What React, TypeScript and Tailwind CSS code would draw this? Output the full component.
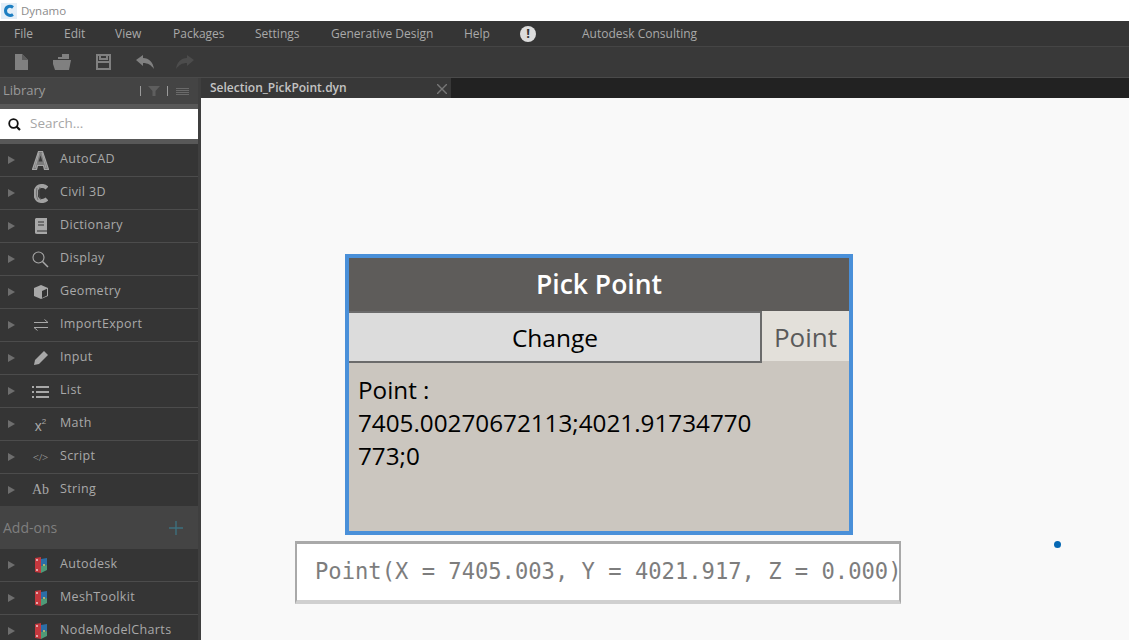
import type { ReactNode } from "react";

const menus = [
  { label: "File", w: "w-[50px]" },
  { label: "Edit", w: "w-[51px]" },
  { label: "View", w: "w-[58px]" },
  { label: "Packages", w: "w-[82px]" },
  { label: "Settings", w: "w-[76px]" },
  { label: "Generative Design", w: "w-[133px]" },
  { label: "Help", w: "w-[56px]" },
];

function PackageIcon() {
  return (
    <svg width="12" height="16" viewBox="0 0 12 16">
      <path d="M0 1 L6 0 V16 L0 15 Z" fill="#c4383e" />
      <path d="M6 2 L12 1 V8 L6 9 Z" fill="#2c6ea6" />
      <path d="M6 9 L12 8 V13 L6 16 Z" fill="#4f9a78" />
      <circle cx="2" cy="3" r="0.9" fill="#f4dede" />
      <circle cx="2" cy="13" r="0.9" fill="#f4dede" />
      <circle cx="9" cy="8" r="0.9" fill="#e8d26a" />
    </svg>
  );
}

const categories: { label: string; icon: ReactNode }[] = [
  {
    label: "AutoCAD",
    icon: (
      <svg width="17" height="19" viewBox="0 0 17 19" fill="none">
        <path d="M0.5 18.5 L6.5 0.5 H10.5 L16.5 18.5 H12.5 L11.5 14.5 H5.5 L4.5 18.5 Z" stroke="#a6a6a6" strokeWidth="1.2" fill="#7c7c7c" />
        <path d="M6.5 10.5 H10.5 L8.5 4.5 Z" fill="#3a3a3a" />
        <path d="M7 2 L3 17 M10 2 L14 17" stroke="#b8b8b8" strokeWidth="0.7" />
      </svg>
    ),
  },
  {
    label: "Civil 3D",
    icon: (
      <svg width="15" height="19" viewBox="0 0 15 19" fill="none">
        <path d="M14 4 C11 1 5 1 3 6 V13 C5 18 11 18 14 15" stroke="#a2a2a2" strokeWidth="4" />
        <path d="M4 4 C3 8 3 12 5 16 M7 3 C5 8 6 13 8 16" stroke="#5c5c5c" strokeWidth="0.7" />
      </svg>
    ),
  },
  {
    label: "Dictionary",
    icon: (
      <svg width="14" height="16" viewBox="0 0 14 16">
        <path d="M2 0 H13 V16 H3 C1 16 1 15 1 14 V1 Z" fill="#a8a8a8" />
        <path d="M4 4 H10 M4 7 H10 M3 13 H13" stroke="#333" strokeWidth="1.2" />
      </svg>
    ),
  },
  {
    label: "Display",
    icon: (
      <svg width="17" height="17" viewBox="0 0 17 17" fill="none" stroke="#a8a8a8" strokeWidth="1.1">
        <circle cx="6.5" cy="6.5" r="5.5" />
        <path d="M10.5 10.5 L16 16" strokeWidth="1.5" />
      </svg>
    ),
  },
  {
    label: "Geometry",
    icon: (
      <svg width="16" height="16" viewBox="0 0 16 16">
        <path d="M8 1 L15 4 V12 L8 15 L1 12 V4 Z" fill="#a8a8a8" />
        <path d="M9 7 L14 4.8 V11.4 L9 14 Z" fill="#333" />
      </svg>
    ),
  },
  {
    label: "ImportExport",
    icon: (
      <svg width="16" height="14" viewBox="0 0 16 14" fill="none" stroke="#a8a8a8" strokeWidth="1">
        <path d="M1 4.5 H15 L11.5 1.5" />
        <path d="M15 9.5 H1 L4.5 12.5" />
      </svg>
    ),
  },
  {
    label: "Input",
    icon: (
      <svg width="16" height="16" viewBox="0 0 16 16">
        <path d="M11 1 L15 5 L6 14 L1 15 L2 10 Z" fill="#a8a8a8" />
      </svg>
    ),
  },
  {
    label: "List",
    icon: (
      <svg width="17" height="13" viewBox="0 0 17 13" fill="#a8a8a8">
        <rect x="0" y="1" width="2" height="2" />
        <rect x="0" y="6" width="2" height="2" />
        <rect x="0" y="11" width="2" height="2" />
        <rect x="4" y="1" width="13" height="2" />
        <rect x="4" y="6" width="13" height="2" />
        <rect x="4" y="11" width="13" height="2" />
      </svg>
    ),
  },
  {
    label: "Math",
    icon: (
      <span className="pt-[4px] font-['Liberation_Sans',sans-serif] text-[14px] leading-none text-[#a8a8a8]">
        x<span className="relative top-[-7px] text-[8px]">2</span>
      </span>
    ),
  },
  {
    label: "Script",
    icon: <span className="font-['Liberation_Serif',serif] text-[11px] leading-none text-[#a8a8a8]">&lt;/&gt;</span>,
  },
  {
    label: "String",
    icon: <span className="font-['Liberation_Serif',serif] text-[14px] leading-none text-[#a8a8a8]">Ab</span>,
  },
];

const addons = ["Autodesk", "MeshToolkit", "NodeModelCharts"];

function LibraryRow({ label, icon, last }: { label: string; icon: ReactNode; last?: boolean }) {
  return (
    <div className={`flex shrink-0 items-center ${last ? "h-[32px]" : "h-[33px] border-b border-[#4c4c4c]"}`}>
      <span className="ml-[8px] h-0 w-0 border-y-[4px] border-l-[7px] border-y-transparent border-l-[#6e6e6e]" />
      <span className="ml-[12px] flex w-[27px] justify-center">{icon}</span>
      <span className="ml-[6px] pb-[2px] text-[12.5px] tracking-[0.35px] text-[#a9a9a9]">{label}</span>
    </div>
  );
}

export default function App() {
  return (
    <div className="flex h-[640px] w-[1129px] flex-col overflow-hidden bg-[#353535] font-['Open_Sans',sans-serif]">
      {/* Title bar */}
      <div className="flex h-[21px] shrink-0 items-center bg-white">
        <svg width="16" height="16" viewBox="0 0 16 16" className="ml-px">
          <rect width="16" height="16" fill="#e3eef7" />
          <path d="M12 4.5 C9.5 2.5 5 3 4.5 7.5 C4.5 12 9 13.5 12 11.5" fill="none" stroke="#1d7fc2" strokeWidth="3" />
        </svg>
        <span className="ml-[4px] text-[11.5px] text-[#8b8b8b]">Dynamo</span>
      </div>

      {/* Menu bar */}
      <div className="flex h-[26px] shrink-0 items-center border-b border-[#454545] bg-[#353535] pl-[14px] text-[12px] text-[#a9a9a9]">
        {menus.map((m) => (
          <span key={m.label} className={m.w}>
            {m.label}
          </span>
        ))}
        <span className="flex h-[16px] w-[16px] items-center justify-center rounded-full bg-[#dcdcdc] text-[13px] font-bold leading-none text-[#333]">
          !
        </span>
        <span className="ml-[46px]">Autodesk Consulting</span>
      </div>

      {/* Toolbar */}
      <div className="flex h-[31px] shrink-0 items-center border-b border-[#4a4a4a] bg-[#393939]">
        <svg width="13" height="16" viewBox="0 0 13 16" className="ml-[15px]">
          <path d="M0 0 H7 L13 6 V16 H0 Z" fill="#808080" />
          <path d="M7 0 L13 6 H7 Z" fill="#5c5c5c" />
        </svg>
        <svg width="19" height="16" viewBox="0 0 19 16" className="ml-[25px]">
          <path d="M5 3 H9 V0 H16 V5 H5 Z" fill="#808080" />
          <path d="M0 6 H18 L16 16 H2 L0 10 Z" fill="#808080" />
        </svg>
        <svg width="15" height="16" viewBox="0 0 15 16" className="ml-[24px]" fill="none" stroke="#808080" strokeWidth="2">
          <rect x="1" y="1" width="13" height="14" />
          <path d="M1 8 H14 M4 1 V5 H11 V1" />
        </svg>
        <svg width="18" height="14" viewBox="0 0 18 14" className="ml-[25px]">
          <path d="M0 5 L7 0 V3 C13 3 17 7 18 14 C15 10 12 8 7 8 V11 Z" fill="#808080" />
        </svg>
        <svg width="18" height="14" viewBox="0 0 18 14" className="ml-[22px]">
          <path d="M18 5 L11 0 V3 C5 3 1 7 0 14 C3 10 6 8 11 8 V11 Z" fill="#4c4c4c" />
        </svg>
      </div>

      <div className="flex min-h-0 flex-1">
        {/* Library */}
        <aside className="flex w-[201px] shrink-0 flex-col overflow-hidden border-r-[3px] border-[#3f3f3f] bg-[#353535]">
          <div className="flex h-[26px] shrink-0 items-center bg-[#444444] pl-[3px] pr-[9px]">
            <span className="text-[13px] text-[#9a9a9a]">Library</span>
            <span className="ml-auto h-[10px] w-px bg-[#9a9a9a]" />
            <svg width="12" height="10" viewBox="0 0 12 10" className="ml-[7px]">
              <path d="M0 0 H12 L7.5 5 V10 H4.5 V5 Z" fill="#5e5e5e" />
            </svg>
            <span className="ml-[7px] h-[10px] w-px bg-[#9a9a9a]" />
            <span className="ml-[8px] flex flex-col gap-[1px]">
              <span className="h-px w-[13px] bg-[#6a6a6a]" />
              <span className="h-px w-[13px] bg-[#6a6a6a]" />
              <span className="h-px w-[13px] bg-[#6a6a6a]" />
              <span className="h-px w-[13px] bg-[#6a6a6a]" />
            </span>
          </div>
          <div className="shrink-0 border-y-[5px] border-[#585858]">
            <div className="flex h-[30px] items-center bg-white pl-[8px]">
              <svg width="13" height="13" viewBox="0 0 13 13" fill="none" stroke="#111" strokeWidth="1.8">
                <circle cx="5.5" cy="5.5" r="4.3" />
                <path d="M8.5 8.5 L12 12" strokeWidth="2.2" />
              </svg>
              <span className="ml-[9px] pb-[2px] text-[13.5px] text-[#a6a6a6]">Search...</span>
            </div>
          </div>
          {categories.map((c, i) => (
            <LibraryRow key={c.label} label={c.label} icon={c.icon} last={i === categories.length - 1} />
          ))}
          <div className="flex h-[43px] shrink-0 items-center bg-[#444444] pl-[3px]">
            <span className="pb-[1px] text-[14px] text-[#7f7f7f]">Add-ons</span>
            <svg width="14" height="14" viewBox="0 0 14 14" className="ml-auto mr-[15px]" stroke="#3d6f7d" strokeWidth="1.4">
              <path d="M7 0 V14 M0 7 H14" />
            </svg>
          </div>
          {addons.map((a) => (
            <LibraryRow key={a} label={a} icon={<PackageIcon />} />
          ))}
        </aside>

        {/* Workspace */}
        <main className="flex min-w-0 flex-1 flex-col">
          <div className="flex h-[20px] shrink-0 bg-[#222222]">
            <div className="relative flex w-[250px] items-center bg-[#383838] pl-[9px] text-[12px] font-semibold text-[#c4c4c4]">
              Selection_PickPoint.dyn
              <svg width="10" height="10" viewBox="0 0 10 10" className="absolute right-[4px] top-[6px]" stroke="#777" strokeWidth="1.4">
                <path d="M0 0 L10 10 M10 0 L0 10" />
              </svg>
            </div>
          </div>

          <div className="relative flex-1 bg-[#f9f9f9]">
            {/* Node */}
            <div className="absolute left-[144px] top-[156px] flex h-[281px] w-[508px] flex-col border-[4px] border-[#4a90d9]">
              <div className="flex h-[53px] shrink-0 items-center justify-center bg-[#5e5c5a] text-[26.5px] font-semibold text-white">
                Pick Point
              </div>
              <div className="flex h-[50px] shrink-0 items-start">
                <div className="relative z-10 flex h-[52px] w-[413px] shrink-0 items-center justify-center border-y-2 border-r-2 border-[#6b6b6b] bg-[#dcdcdc] pl-[1px] pt-[2px] text-[24.5px] text-black">
                  Change
                </div>
                <div className="flex h-[50px] flex-1 items-center justify-center bg-[#e3e0da] pt-[2px] text-[26px] text-[#5a5a5a]">
                  Point
                </div>
              </div>
              <div className="flex-1 bg-[#cbc6bf] pl-[9px] pr-[90px] pt-[12px] text-[24.25px] leading-[33px] text-black [overflow-wrap:anywhere]">
                <div>Point :</div>
                <div>7405.00270672113;4021.91734770773;0</div>
              </div>
            </div>

            {/* Preview bubble */}
            <div className="absolute left-[94px] top-[443px] flex h-[63px] w-[606px] items-center overflow-hidden border-x-2 border-t-[3px] border-b-[4px] border-x-[#a9a9a9] border-t-[#a9a9a9] border-b-[#d0d0d0] bg-white pl-[18px] font-['DejaVu_Sans_Mono',monospace] text-[22.15px] whitespace-nowrap text-[#7d7d7d]">
              Point(X = 7405.003, Y = 4021.917, Z = 0.000)
            </div>

            {/* Point marker */}
            <span className="absolute left-[853px] top-[443px] h-[7px] w-[7px] rounded-full bg-[#0668b3]" />
          </div>
        </main>
      </div>
    </div>
  );
}
